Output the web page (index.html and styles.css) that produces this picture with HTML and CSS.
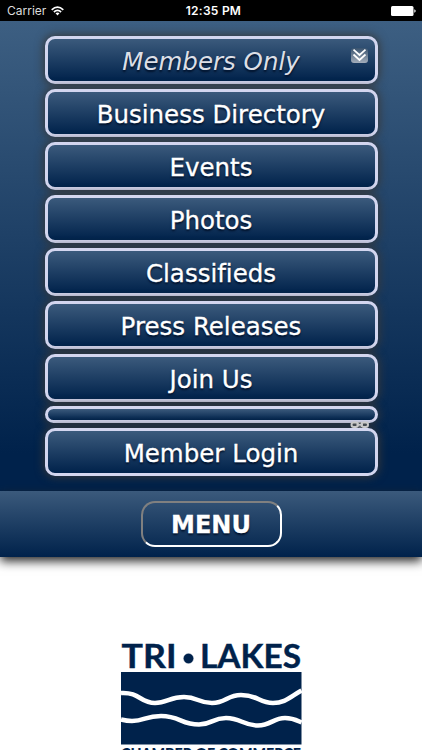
FILE: index.html
```html
<!DOCTYPE html>
<html lang="en">
<head>
<meta charset="utf-8">
<title>Tri-Lakes Chamber of Commerce</title>
<link rel="stylesheet" href="styles.css">
</head>
<body>
<header class="status">
  <div class="carrier"><span>Carrier</span>
    <svg width="13" height="10" viewBox="0 0 13 10" fill="none" stroke="#fff" stroke-width="1.7"><path d="M.7 3.8Q6.500-1.600 12.300 3.800M2.900 6Q6.500 2.800 10.100 6"/><path d="M4.500 7.300Q6.500 5.700 8.500 7.300L6.500 9.500Z" fill="#fff" stroke="none"/></svg>
  </div>
  <span class="time">12:35 PM</span>
  <svg class="battery" width="25" height="10" viewBox="0 0 25 10" fill="#fff"><rect width="22.500" height="10" rx="1.500"/><path d="M23.300 3.300q1.400.4 1.400 1.700t-1.400 1.700z"/></svg>
</header>
<nav class="panel">
  <a class="item current"><span>Members Only</span>
    <svg class="chevrons" width="17" height="15" viewBox="0 0 17 15"><defs><linearGradient id="c" x2="0" y2="1"><stop stop-color="#39536f"/><stop offset="1" stop-color="#a3adba"/></linearGradient></defs><rect width="17" height="15" rx="3" fill="url(#c)"/><path d="M2.500 1.700L8.500 7l6-5.300M2.500 6.500l6 5.500 6-5.500" fill="none" stroke="#fff" stroke-width="1.700"/></svg>
  </a>
  <a class="item"><span>Business Directory</span></a>
  <a class="item"><span>Events</span></a>
  <a class="item"><span>Photos</span></a>
  <a class="item"><span>Classifieds</span></a>
  <a class="item"><span>Press Releases</span></a>
  <a class="item"><span>Join Us</span></a>
  <a class="item empty"></a>
  <a class="item"><span>Member Login</span>
    <svg class="chain" width="20" height="8" viewBox="0 0 20 8"><g fill="#454b51" stroke="#c9c9c9" stroke-width="2"><rect x="1.500" y="1.500" width="6.500" height="4.500" rx="2.200"/><rect x="11.500" y="1.500" width="6.500" height="4.500" rx="2.200"/></g><path d="M6.500 3.750h6.500" stroke="#c9c9c9" stroke-width="2"/><path d="M8.500 1.500h2.500M8.500 6h2.500" stroke="#999"/></svg>
  </a>
</nav>
<div class="menubar"><button class="menu"><span>MENU</span></button></div>
<main class="content">
  <svg class="logo" width="182" height="109" viewBox="0 0 182 109">
    <g fill="#00224b" stroke="#00224b" stroke-width=".4" font-family="Lato, sans-serif" font-weight="700" font-size="33">
      <text x="1.500" y="25" textLength="55" lengthAdjust="spacingAndGlyphs">TRI</text>
      <circle cx="68.500" cy="15.500" r="4.800"/>
      <text x="80" y="25" textLength="101" lengthAdjust="spacingAndGlyphs">LAKES</text>
    </g>
    <path d="M1 29H181.500V101.500H1Z" fill="#00224b"/>
    <path d="M1 50C20 49 20 60 35 60C47 60 50 54 64 54C78 54 78 60 92 60C106 60 107 52 121 52C138 52 139 60 153 60C165 60 170 54 181.500 47.500M1 76.500C7 78 7 78 12 78C25 78 25 73 41 73C60 73 61 81.500 79 81.500C92 81.500 92 75 106 75C121 75 123 82.500 138 82.500C151 82.500 153 75 165 75C173 75 176 77 181.500 79.500" fill="none" stroke="#fff" stroke-width="4.600"/>
    <text x="1" y="115.500" textLength="180" lengthAdjust="spacingAndGlyphs" font-family="Lato, sans-serif" font-weight="900" font-size="15" fill="#00224b">CHAMBER OF COMMERCE</text>
  </svg>
</main>
</body>
</html>
```
FILE: styles.css
```css
* { box-sizing: border-box; }
body {
  margin: 0;
  height: 750px;
  overflow: hidden;
  background: #fff;
  font-family: Verdana, "DejaVu Sans", sans-serif;
}
.status {
  height: 21px;
  padding: 0 6px 0 7px;
  background: #000;
  color: #fff;
  display: grid;
  grid-template-columns: 1fr auto 1fr;
  align-items: center;
  font: 12px/21px Inter, sans-serif;
}
.carrier { display: flex; align-items: center; gap: 5px; color: #ddd; }
.time { font-weight: 600; letter-spacing: .25px; padding-left: 4px; }
.battery { justify-self: end; }
.panel {
  height: 470px;
  padding: 15px 44.5px 0;
  display: flex;
  flex-direction: column;
  gap: 5px;
  background: linear-gradient(#3d5f82, #00224b 92%);
}
.item {
  position: relative;
  flex: none;
  height: 48px;
  border: 3px solid #d3d6ef;
  border-radius: 10px;
  background: linear-gradient(#3b5a7c, #00224b);
  box-shadow: 0 0 10px 1px #383838;
  color: #fff;
  display: flex;
  align-items: center;
  justify-content: center;
  padding-top: 3px;
  font-size: 24.5px;
  font-variant-ligatures: none;
  -webkit-text-stroke: .3px currentColor;
  text-shadow: 0 2px 2px #00112a;
  white-space: nowrap;
}
.current { color: #dcdfe6; font-style: italic; -webkit-text-stroke: 0; }
.empty { height: 17px; margin-top: -1px; }
.chevrons { position: absolute; right: 7px; top: 9px; }
.chain { position: absolute; right: 5px; top: -10px; }
.menubar {
  position: relative;
  height: 66px;
  display: flex;
  align-items: center;
  justify-content: center;
  background: linear-gradient(#3b5a7c, #00224b);
  box-shadow: 0 4px 10px #222;
}
.menu {
  width: 141px;
  height: 46px;
  padding: 2px 0 0;
  border: 2px solid;
  border-color: #808080 #fff #fff #808080;
  border-radius: 14px;
  background: transparent;
  color: #fff;
  font: bold 24px Verdana, "DejaVu Sans", sans-serif;
  -webkit-text-stroke: .3px #fff;
  text-shadow: 0 2px 2px #00112a;
}
.content { height: 193px; overflow: hidden; display: flex; justify-content: center; padding-top: 86px; }
.logo { flex: none; overflow: visible; }
```
